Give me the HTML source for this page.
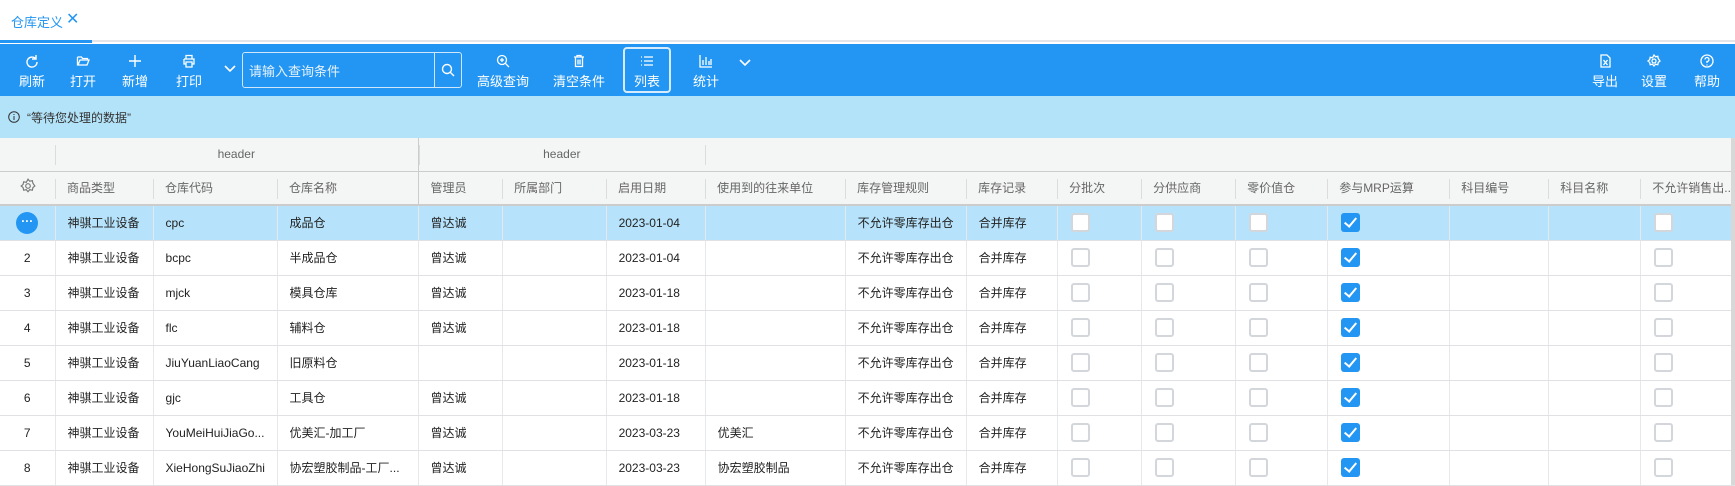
<!DOCTYPE html><html><head><meta charset="utf-8"><style>
*{box-sizing:border-box;margin:0;padding:0}
body{width:1735px;height:485px;overflow:hidden;background:#fff;font-family:"Liberation Sans","Noto Sans CJK SC",sans-serif;font-size:12px;color:#222;position:relative}
.abs{position:absolute}
.tb{position:absolute;top:44px;left:0;width:1735px;height:52px;background:#2396f3;color:#fff}
.btn{position:absolute;top:0;height:52px;width:70px;margin-left:-35px;text-align:center;white-space:nowrap}
.btn svg{position:absolute;top:10px;left:28px}
.btn span{position:absolute;top:27px;left:0;width:100%;font-size:13px}
table{position:absolute;left:0;top:138px;border-collapse:collapse;table-layout:fixed;width:1735px}
td{height:35px;border-bottom:1px solid #dfe1e5;border-right:1px solid #e6e8eb;padding-left:12px;white-space:nowrap;overflow:hidden}
tr.h td{background:#f4f5f5;color:#666;height:34px;border-right:none;position:relative}
tr.h td.s:before{content:"";position:absolute;left:0;top:7px;height:20px;border-left:1px solid #dcdcdc}
tr.g td{height:33px;border-bottom:1px solid #ccc}
tr.sel td{background:#b6e3fb}
.cb{display:inline-block;width:19px;height:19px;border:2px solid #d3d6db;border-radius:3px;background:#fff;vertical-align:middle;margin-left:1px}
.ck{display:inline-block;width:19px;height:19px;border-radius:3px;background:#2396f3;vertical-align:middle;margin-left:1px;position:relative}
.ck:after{content:"";position:absolute;left:6px;top:2px;width:5px;height:10px;border:solid #fff;border-width:0 2px 2px 0;transform:rotate(40deg)}
td.n{text-align:center;padding-left:0}
</style></head><body>
<div class="abs" style="left:11px;top:12px;font-size:13px;color:#2396f3">仓库定义</div>
<div class="abs" style="left:66px;top:9px;font-size:16px;color:#2396f3">✕</div>
<div class="abs" style="left:0;top:40px;width:1735px;height:2px;background:#e3e5e8"></div>
<div class="abs" style="left:0;top:40px;width:92px;height:3px;background:#2396f3"></div>
<div class="tb">
<div class="btn" style="left:32px"><svg width="14" height="14" viewBox="0 0 14 14" fill="none" stroke="#fff" stroke-width="1.4"><path d="M10.5 4.5A5 5 0 1 0 12 8"/><path d="M11 1v4H7"/></svg><span>刷新</span></div>
<div class="btn" style="left:83px"><svg width="14" height="14" viewBox="0 0 14 14" fill="none" stroke="#fff" stroke-width="1.3"><path d="M1.5 3h4l1 1.5h5v2M1.5 3v8h9.5l2-5H4L2 11"/></svg><span>打开</span></div>
<div class="btn" style="left:135px"><svg width="14" height="14" viewBox="0 0 14 14" fill="none" stroke="#fff" stroke-width="1.4"><path d="M7 1v12M1 7h12"/></svg><span>新增</span></div>
<div class="btn" style="left:189px"><svg width="14" height="14" viewBox="0 0 14 14" fill="none" stroke="#fff" stroke-width="1.3"><path d="M4 5V1.5h6V5M2 5h10v5h-2M4 10H2V5M4 8h6v5H4z"/></svg><span>打印</span></div>
<svg class="abs" style="left:223px;top:20px" width="14" height="10" viewBox="0 0 14 10" fill="none" stroke="#fff" stroke-width="1.6"><path d="M2 2l5 5 5-5"/></svg>
<div class="abs" style="left:242px;top:8px;width:220px;height:36px;border:1px solid #cfe6fb;border-radius:3px"></div>
<div class="abs" style="left:434px;top:8px;width:1px;height:36px;background:#cfe6fb"></div>
<div class="abs" style="left:249px;top:17px;font-size:13px;color:#e6f2fd">请输入查询条件</div>
<svg class="abs" style="left:441px;top:19px" width="14" height="14" viewBox="0 0 14 14" fill="none" stroke="#fff" stroke-width="1.4"><circle cx="6" cy="6" r="4.5"/><path d="M9.5 9.5L13 13"/></svg>
<div class="btn" style="left:503px"><svg width="14" height="14" viewBox="0 0 14 14" fill="none" stroke="#fff" stroke-width="1.3"><circle cx="6" cy="6" r="4.5"/><path d="M9.5 9.5L13 13M6 4v4M4 6h4"/></svg><span>高级查询</span></div>
<div class="btn" style="left:579px"><svg width="14" height="14" viewBox="0 0 14 14" fill="none" stroke="#fff" stroke-width="1.3"><path d="M2 3h10M5 3V1.5h4V3M3.5 3v9.5h7V3M6 5.5v5M8 5.5v5"/></svg><span>清空条件</span></div>
<div class="abs" style="left:623px;top:3px;width:48px;height:46px;border:2px solid #d6ecfd;border-radius:4px"></div>
<div class="btn" style="left:647px"><svg width="14" height="14" viewBox="0 0 14 14" fill="none" stroke="#fff" stroke-width="1.3"><path d="M1 3h1M1 7h1M1 11h1M4 3h9M4 7h9M4 11h9"/></svg><span>列表</span></div>
<div class="btn" style="left:706px"><svg width="14" height="14" viewBox="0 0 14 14" fill="none" stroke="#fff" stroke-width="1.3"><path d="M1 1v12h12M4 11V6M7 11V3M10 11V7M12 11V5"/></svg><span>统计</span></div>
<svg class="abs" style="left:738px;top:14px" width="14" height="10" viewBox="0 0 14 10" fill="none" stroke="#fff" stroke-width="1.6"><path d="M2 2l5 5 5-5"/></svg>
<div class="btn" style="left:1605px"><svg width="14" height="14" viewBox="0 0 14 14" fill="none" stroke="#fff" stroke-width="1.3"><path d="M3 1h6l3 3v9H3zM5.5 6l4 5M9.5 6l-4 5"/></svg><span>导出</span></div>
<div class="btn" style="left:1654px"><svg width="14" height="14" viewBox="0 0 14 14" fill="none" stroke="#fff" stroke-width="1.3"><circle cx="7" cy="7" r="2"/><path d="M7 1l1.5 1.8 2.3-.5.5 2.3L13 7l-1.7 1.4-.5 2.3-2.3-.5L7 12l-1.5-1.8-2.3.5-.5-2.3L1 7l1.7-1.4.5-2.3 2.3.5z"/></svg><span>设置</span></div>
<div class="btn" style="left:1707px"><svg width="14" height="14" viewBox="0 0 14 14" fill="none" stroke="#fff" stroke-width="1.3"><circle cx="7" cy="7" r="6"/><path d="M5 5.5a2 2 0 1 1 2 2v1.5M7 10.5v1"/></svg><span>帮助</span></div>
</div>
<div class="abs" style="left:0;top:96px;width:1735px;height:42px;background:#b3e3f9"></div>
<svg class="abs" style="left:8px;top:111px" width="12" height="12" viewBox="0 0 12 12" fill="none" stroke="#333" stroke-width="1"><circle cx="6" cy="6" r="5.3"/><path d="M6 5v4M6 3v1"/></svg>
<div class="abs" style="left:27px;top:109px;font-size:12px;color:#333">“等待您处理的数据”</div>
<table>
<colgroup><col style="width:55px"><col style="width:98px"><col style="width:124px"><col style="width:141px"><col style="width:84px"><col style="width:104px"><col style="width:99px"><col style="width:140px"><col style="width:121px"><col style="width:91px"><col style="width:84px"><col style="width:94px"><col style="width:92px"><col style="width:122px"><col style="width:99px"><col style="width:92px"><col style="width:94px"></colgroup>
<tr class="h g"><td></td><td colspan="3" class="s" style="text-align:center;padding:0">header</td><td colspan="3" class="s" style="text-align:center;padding:0;border-left:1px solid #ccc">header</td><td colspan="10" class="s"></td></tr>
<tr class="h" style="border-bottom:2px solid #ccc"><td style="text-align:center;padding:0"><svg width="16" height="16" viewBox="0 0 14 14" fill="none" stroke="#777" stroke-width="1"><circle cx="7" cy="7" r="2"/><path d="M7 1l1.5 1.8 2.3-.5.5 2.3L13 7l-1.7 1.4-.5 2.3-2.3-.5L7 12l-1.5-1.8-2.3.5-.5-2.3L1 7l1.7-1.4.5-2.3 2.3.5z"/></svg></td><td class="s">商品类型</td><td class="s">仓库代码</td><td class="s">仓库名称</td><td style="border-left:1px solid #ccc">管理员</td><td class="s">所属部门</td><td class="s">启用日期</td><td class="s">使用到的往来单位</td><td class="s">库存管理规则</td><td class="s">库存记录</td><td class="s">分批次</td><td class="s">分供应商</td><td class="s">零价值仓</td><td class="s">参与MRP运算</td><td class="s">科目编号</td><td class="s">科目名称</td><td class="s">不允许销售出...</td></tr>
<tr class="sel"><td class="n"><span style="display:inline-block;width:22px;height:22px;border-radius:50%;background:#2396f3;color:#fff;line-height:18px;font-weight:bold;vertical-align:middle">···</span></td><td>神骐工业设备</td><td>cpc</td><td>成品仓</td><td>曾达诚</td><td></td><td>2023-01-04</td><td></td><td>不允许零库存出仓</td><td>合并库存</td><td><span class="cb"></span></td><td><span class="cb"></span></td><td><span class="cb"></span></td><td><span class="ck"></span></td><td></td><td></td><td><span class="cb"></span></td></tr>
<tr><td class="n">2</td><td>神骐工业设备</td><td>bcpc</td><td>半成品仓</td><td>曾达诚</td><td></td><td>2023-01-04</td><td></td><td>不允许零库存出仓</td><td>合并库存</td><td><span class="cb"></span></td><td><span class="cb"></span></td><td><span class="cb"></span></td><td><span class="ck"></span></td><td></td><td></td><td><span class="cb"></span></td></tr>
<tr><td class="n">3</td><td>神骐工业设备</td><td>mjck</td><td>模具仓库</td><td>曾达诚</td><td></td><td>2023-01-18</td><td></td><td>不允许零库存出仓</td><td>合并库存</td><td><span class="cb"></span></td><td><span class="cb"></span></td><td><span class="cb"></span></td><td><span class="ck"></span></td><td></td><td></td><td><span class="cb"></span></td></tr>
<tr><td class="n">4</td><td>神骐工业设备</td><td>flc</td><td>辅料仓</td><td>曾达诚</td><td></td><td>2023-01-18</td><td></td><td>不允许零库存出仓</td><td>合并库存</td><td><span class="cb"></span></td><td><span class="cb"></span></td><td><span class="cb"></span></td><td><span class="ck"></span></td><td></td><td></td><td><span class="cb"></span></td></tr>
<tr><td class="n">5</td><td>神骐工业设备</td><td>JiuYuanLiaoCang</td><td>旧原料仓</td><td></td><td></td><td>2023-01-18</td><td></td><td>不允许零库存出仓</td><td>合并库存</td><td><span class="cb"></span></td><td><span class="cb"></span></td><td><span class="cb"></span></td><td><span class="ck"></span></td><td></td><td></td><td><span class="cb"></span></td></tr>
<tr><td class="n">6</td><td>神骐工业设备</td><td>gjc</td><td>工具仓</td><td>曾达诚</td><td></td><td>2023-01-18</td><td></td><td>不允许零库存出仓</td><td>合并库存</td><td><span class="cb"></span></td><td><span class="cb"></span></td><td><span class="cb"></span></td><td><span class="ck"></span></td><td></td><td></td><td><span class="cb"></span></td></tr>
<tr><td class="n">7</td><td>神骐工业设备</td><td>YouMeiHuiJiaGo...</td><td>优美汇-加工厂</td><td>曾达诚</td><td></td><td>2023-03-23</td><td>优美汇</td><td>不允许零库存出仓</td><td>合并库存</td><td><span class="cb"></span></td><td><span class="cb"></span></td><td><span class="cb"></span></td><td><span class="ck"></span></td><td></td><td></td><td><span class="cb"></span></td></tr>
<tr><td class="n">8</td><td>神骐工业设备</td><td>XieHongSuJiaoZhi</td><td>协宏塑胶制品-工厂...</td><td>曾达诚</td><td></td><td>2023-03-23</td><td>协宏塑胶制品</td><td>不允许零库存出仓</td><td>合并库存</td><td><span class="cb"></span></td><td><span class="cb"></span></td><td><span class="cb"></span></td><td><span class="ck"></span></td><td></td><td></td><td><span class="cb"></span></td></tr>
</table>
<div class="abs" style="left:1731px;top:138px;width:4px;height:347px;background:#d8d8d8"></div>
</body></html>
